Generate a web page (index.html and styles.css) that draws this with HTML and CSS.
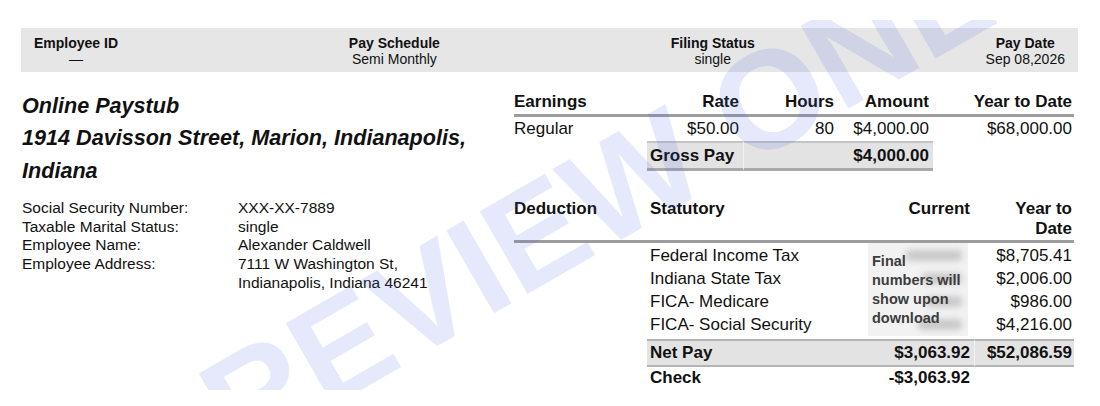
FILE: index.html
```html
<!DOCTYPE html>
<html lang="en">
<head>
<meta charset="utf-8">
<title>Online Paystub</title>
<link rel="stylesheet" href="styles.css">
</head>
<body>
<div class="page">
  <div class="summary">
    <div class="sum-item"><div class="sum-label">Employee ID</div><div class="sum-value">—</div></div>
    <div class="sum-item"><div class="sum-label">Pay Schedule</div><div class="sum-value">Semi Monthly</div></div>
    <div class="sum-item"><div class="sum-label">Filing Status</div><div class="sum-value">single</div></div>
    <div class="sum-item"><div class="sum-label">Pay Date</div><div class="sum-value">Sep 08,2026</div></div>
  </div>

  <div class="main">
    <div class="company">
      <div class="company-name">Online Paystub</div>
      <div class="company-addr">1914 Davisson Street, Marion, Indianapolis,<br>Indiana</div>
    </div>

    <div class="earn">
      <div class="c hd left">Earnings</div>
      <div class="c hd">Rate</div>
      <div class="c hd">Hours</div>
      <div class="c hd">Amount</div>
      <div class="c hd last">Year to Date</div>

      <div class="c left">Regular</div>
      <div class="c">$50.00</div>
      <div class="c">80</div>
      <div class="c">$4,000.00</div>
      <div class="c last">$68,000.00</div>

      <div class="c"></div>
      <div class="c tot left-pad">Gross Pay</div>
      <div class="c tot seam"></div>
      <div class="c tot">$4,000.00</div>
      <div class="c"></div>
    </div>

    <div class="info">
      <div class="info-label">Social Security Number:</div><div>XXX-XX-7889</div>
      <div class="info-label">Taxable Marital Status:</div><div>single</div>
      <div class="info-label">Employee Name:</div><div>Alexander Caldwell</div>
      <div class="info-label">Employee Address:</div><div>7111 W Washington St,<br>Indianapolis, Indiana 46241</div>
    </div>

    <div class="ded">
      <div class="d hd left">Deduction</div>
      <div class="d hd left-pad">Statutory</div>
      <div class="d hd">Current</div>
      <div class="d hd last">Year to<br>Date</div>

      <div class="d row first left-pad r1">Federal Income Tax</div>
      <div class="note">
        <div class="note-blur">
          <span class="smudge s1"></span>
          <span class="smudge s2"></span>
          <span class="smudge s3"></span>
          <span class="smudge s4"></span>
        </div>
        <div class="note-text">Final<br>numbers will<br>show upon<br>download</div>
      </div>
      <div class="d row first last r1">$8,705.41</div>

      <div class="d row left-pad r2">Indiana State Tax</div>
      <div class="d row last r2">$2,006.00</div>

      <div class="d row left-pad r3">FICA- Medicare</div>
      <div class="d row last r3">$986.00</div>

      <div class="d row left-pad r4">FICA- Social Security</div>
      <div class="d row last r4">$4,216.00</div>

      <div class="d net left-pad">Net Pay</div>
      <div class="d net">$3,063.92</div>
      <div class="d net last seam">$52,086.59</div>

      <div class="d chk left-pad">Check</div>
      <div class="d chk">-$3,063.92</div>
      <div class="d chk last"></div>
    </div>
  </div>

  <div class="watermark">PREVIEW ONLY</div>
</div>
</body>
</html>
```

FILE: styles.css
```css
* { box-sizing: border-box; }

body {
  margin: 0;
  background: #ffffff;
  color: #111111;
  font-family: "Liberation Sans", Arial, sans-serif;
}

.page {
  position: relative;
  height: 370px;
  margin-top: 20px;
  overflow: hidden;
  padding: 8px 22px 0 21px;
}

/* summary bar */
.summary {
  display: flex;
  justify-content: space-between;
  height: 44px;
  padding: 7px 13px 0;
  background: #e6e6e6;
  font-size: 14px;
  line-height: 16px;
}
.sum-item { text-align: center; }
.sum-label { font-weight: bold; }

/* main grid */
.main {
  display: grid;
  grid-template-columns: 493px 560px;
  row-gap: 12px;
  margin-top: 18px;
}

.company {
  padding-left: 1px;
  font-weight: bold;
  font-style: italic;
  font-size: 21.6px;
}
.company-name {
  padding-top: 2px;
  line-height: 27px;
}
.company-addr {
  margin-top: 3px;
  line-height: 32.5px;
}

/* earnings */
.earn {
  display: grid;
  grid-template-columns: 133px 96px 95px 95px 1fr;
  align-content: start;
  font-size: 17px;
}
.c {
  height: 24px;
  line-height: 24px;
  text-align: right;
  padding-right: 4px;
  white-space: nowrap;
}
.c.left { text-align: left; padding-right: 0; }
.c.last { padding-right: 2px; }
.c.left-pad { text-align: left; padding-left: 3px; }
.hd {
  font-weight: bold;
  border-bottom: 3px solid #9d9d9d;
}
.c.hd { height: 27px; }
.c.tot {
  height: 30px;
  padding-top: 1px;
  font-weight: bold;
  background: #e3e3e3;
  border-top: 2px solid #c4c4c4;
  border-bottom: 3px solid #a9a9a9;
}
.seam { border-left: 1px solid #f2f2f2; }

/* employee info */
.info {
  display: grid;
  grid-template-columns: 216px 1fr;
  align-content: start;
  padding-left: 1px;
  font-size: 15.5px;
  line-height: 18.7px;
}

/* deductions */
.ded {
  display: grid;
  grid-template-columns: 133px 223px 104px 1fr;
  align-content: start;
  font-size: 17px;
}
.d {
  text-align: right;
  padding-right: 4px;
  white-space: nowrap;
}
.d.left { text-align: left; padding-right: 0; }
.d.left-pad { grid-column: 2; text-align: left; padding-left: 3px; }
.d.last { padding-right: 2px; }
.d.hd {
  line-height: 20px;
  height: 44px;
}
.d.row {
  height: 23px;
  line-height: 23px;
}
.d.row.first { padding-top: 1px; height: 24px; line-height: 23px; }
.d.row.last { grid-column: 4; }
.r1 { grid-row: 2; }
.r2 { grid-row: 3; }
.r3 { grid-row: 4; }
.r4 { grid-row: 5; }

.note {
  grid-column: 3;
  grid-row: 2 / span 4;
  position: relative;
  margin: 0 6px 0 -2px;
  background: #f2f2f2;
  overflow: hidden;
}
.note-blur {
  position: absolute;
  inset: 0;
  filter: blur(3px);
}
.smudge {
  position: absolute;
  right: 6px;
  height: 11px;
  background: #c9c9c9;
  border-radius: 4px;
}
.s1 { top: 7px; width: 56px; }
.s2 { top: 30px; width: 40px; }
.s3 { top: 53px; width: 36px; }
.s4 { top: 76px; width: 44px; }
.note-text {
  position: relative;
  padding: 9px 0 0 4px;
  font-size: 14.5px;
  font-weight: bold;
  line-height: 19px;
  color: #3c3c3c;
}

.d.net {
  grid-row: 6;
  margin-top: 3px;
  height: 28px;
  line-height: 24px;
  font-weight: bold;
  background: #e3e3e3;
  border-top: 2px solid #b4b4b4;
  border-bottom: 2px solid #b4b4b4;
}
.ded .net + .net { grid-column: 3; }
.ded .net.last { grid-column: 4; }
.d.chk {
  grid-row: 7;
  height: 24px;
  line-height: 22px;
  font-weight: bold;
}
.ded .chk + .chk { grid-column: 3; }
.ded .chk.last { grid-column: 4; }

/* watermark */
.watermark {
  position: absolute;
  left: 590px;
  top: 182px;
  transform: translate(-50%, -50%) rotate(-30deg);
  font-size: 139px;
  font-weight: bold;
  line-height: 1;
  white-space: nowrap;
  color: rgba(70, 100, 225, 0.14);
  pointer-events: none;
}
```
